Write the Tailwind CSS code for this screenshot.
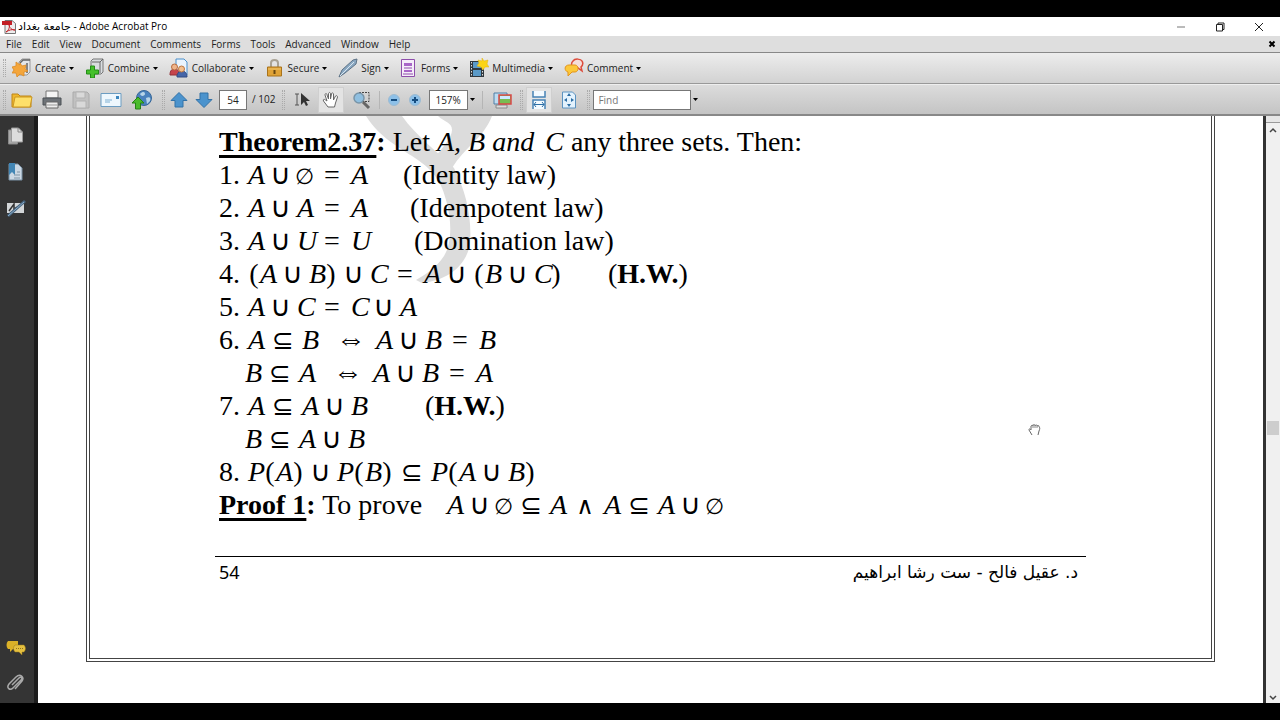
<!DOCTYPE html>
<html lang="en">

<head>
  <meta charset="utf-8">
  <title>Adobe Acrobat Pro</title>
  <script src="https://cdn.jsdelivr.net/npm/@tailwindcss/browser@4"></script>
  <script>
    // letters and operators each get their own cell so the formulas line up
    const cells = {
      '∪': "inline-block w-[33px] text-center font-['DejaVu_Sans'] leading-none",
      '∅': "inline-block w-[16px] -indent-[2px] font-['DejaVu_Sans'] text-[22px] leading-none",
      '=': 'inline-block w-[38px] text-center leading-none',
      '⊆': "inline-block w-[38px] text-center font-['DejaVu_Sans'] text-[26px] leading-none",
      '∧': "inline-block w-[38px] text-center font-['DejaVu_Sans'] text-[24px] leading-none",
      '⇔': "inline-block w-[58px] pl-[8px] text-center font-['Liberation_Serif'] text-[30px] leading-none",
      '(': 'inline-block w-[12px] text-center',
      ')': 'inline-block w-[12px] text-center',
    };

    window.addEventListener('DOMContentLoaded', () => {
      document.querySelectorAll('.formula').forEach((el) => {
        const chars = el.textContent.replace(/\s/g, '');
        el.textContent = '';
        for (const ch of chars) {
          const cell = document.createElement('span');
          cell.className = cells[ch] || 'inline-block w-[16px] italic';
          cell.textContent = ch;
          el.append(cell);
        }
      });
    });
  </script>
</head>

<body class="h-screen flex flex-col bg-black py-[17px] overflow-hidden font-['Open_Sans','Noto_Sans',sans-serif] text-[10px] text-[#222]">
  <!-- title bar -->
  <header class="h-[19px] shrink-0 flex items-center bg-white pl-0.5 pr-4 text-black">
    <svg class="w-[14px] h-[14px]" viewBox="0 0 14 14">
      <path d="M3 .5h7l3.500 3v10H3z" fill="#eee" stroke="#777" />
      <path d="M0 1h10v4H0z" fill="#c32026" />
      <path d="M4 12c3-2 4-5 3-8 0 4 3 6 6 6-3-1-6 0-9 2z" fill="none" stroke="#c32026" />
    </svg>
    <h1 class="ml-0.5 pt-0.5 whitespace-nowrap"><bdi class="font-['DejaVu_Sans'] text-[11px]">جامعة بغداد</bdi> - Adobe Acrobat Pro</h1>
    <div class="ml-auto flex items-center gap-[29px]">
      <button aria-label="Minimize"><svg class="w-[10px] h-[10px]" viewBox="0 0 10 10"><path d="M1 5h8" stroke="#777" /></svg></button>
      <button aria-label="Restore"><svg class="w-[10px] h-[10px]" viewBox="0 0 10 10" fill="none" stroke="#222"><path d="M1.500 2.500h6v6.500h-6zM3 2.500v-1.500h6v6.500h-1.500" /></svg></button>
      <button aria-label="Close"><svg class="w-[10px] h-[10px]" viewBox="0 0 10 10"><path d="M1 1l8 8M9 1l-8 8" stroke="#222" /></svg></button>
    </div>
  </header>

  <!-- menu bar -->
  <nav class="h-[17px] shrink-0 flex items-center gap-[10px] bg-[#dedede] pl-1.5 pr-1 border-b border-[#888]">
    <button>File</button>
    <button>Edit</button>
    <button>View</button>
    <button>Document</button>
    <button>Comments</button>
    <button>Forms</button>
    <button>Tools</button>
    <button>Advanced</button>
    <button>Window</button>
    <button>Help</button>
    <button class="ml-auto" aria-label="Close document"><svg class="w-[8px] h-[8px]" viewBox="0 0 8 8"><path d="M1.500 1.500l5 5M6.500 1.500l-5 5" stroke="#000" stroke-width="2" /></svg></button>
  </nav>

  <!-- task toolbar -->
  <div class="h-[31px] shrink-0 flex items-center gap-[11px] bg-linear-to-b from-[#ededed] to-[#d2d2d2] border-b border-[#999] pl-[3px]">
    <button class="flex items-center gap-[3px]">
      <span class="w-[3px] h-[18px] mr-[3px] border-x border-dotted border-[#aaa]"></span>
      <svg class="w-[20px] h-[20px]" viewBox="0 0 20 20">
        <path d="M7 4l3-3h8v13l-3 3H7z" fill="#e3e6e9" stroke="#999" />
        <path d="M8 5l3-3h7M15 5v10" fill="none" stroke="#666" stroke-width="1.500" />
        <path d="M8 6l2 3 4-1-1 4 3 2-4 1 0 4-4-2-3 3-1-4-4 0 2-3-2-3 4-1 0-4 4 3z" transform="translate(0 -1)" fill="#f4a63c" stroke="#dc8a25" stroke-width=".8" />
      </svg>
      <span>Create</span>
      <svg class="w-[5px] h-[3px]" viewBox="0 0 5 3"><path d="M0 0h5L2.500 3z" /></svg>
    </button>
    <button class="flex items-center gap-[3px]">
      <svg class="w-[20px] h-[20px]" viewBox="0 0 20 20">
        <path d="M6 3l2-2h10v13l-2 2H6z" fill="#d9dde0" stroke="#777" />
        <path d="M7 4h8v11M15 4l3-3" fill="none" stroke="#666" />
        <path d="M5.500 8h4v4h4v4h-4v4h-4v-4h-4v-4h4z" fill="#45c02b" stroke="#258d18" />
      </svg>
      <span>Combine</span>
      <svg class="w-[5px] h-[3px]" viewBox="0 0 5 3"><path d="M0 0h5L2.500 3z" /></svg>
    </button>
    <button class="flex items-center gap-[3px]">
      <svg class="w-[20px] h-[20px]" viewBox="0 0 20 20">
        <path d="M7 1h8l3 3v13H7z" fill="#eaf4fd" stroke="#4a90cc" />
        <path d="M1 17c0-5 2-6 5-6s4 2 4 6z" fill="#c6444c" stroke="#943039" />
        <circle cx="5.500" cy="9" r="3" fill="#efb48a" stroke="#b86d40" />
        <path d="M8 19c0-4 2-6 5-6s5 2 5 6z" fill="#4565a8" stroke="#314a82" />
        <circle cx="12.500" cy="11" r="3" fill="#f3bf8d" stroke="#bc7640" />
      </svg>
      <span>Collaborate</span>
      <svg class="w-[5px] h-[3px]" viewBox="0 0 5 3"><path d="M0 0h5L2.500 3z" /></svg>
    </button>
    <button class="flex items-center gap-[3px]">
      <svg class="w-[20px] h-[20px]" viewBox="0 0 20 20">
        <path d="M6 9V5c0-4 7-4 7 0v4" fill="none" stroke="#a9a294" stroke-width="2" />
        <path d="M2.500 9h14v9h-14z" fill="#e0a336" stroke="#a9731b" />
        <path d="M3 11h13" stroke="#f0c56c" />
        <path d="M9.500 12v4" stroke="#684711" stroke-width="2" />
      </svg>
      <span>Secure</span>
      <svg class="w-[5px] h-[3px]" viewBox="0 0 5 3"><path d="M0 0h5L2.500 3z" /></svg>
    </button>
    <button class="flex items-center gap-[3px]">
      <svg class="w-[20px] h-[20px]" viewBox="0 0 20 20">
        <path d="M1 19L4 12 15 2l4-1-1 5L7 15z" fill="#8aa8c2" stroke="#5d7286" />
        <path d="M2 18L16 4" stroke="#d9e6f0" />
      </svg>
      <span>Sign</span>
      <svg class="w-[5px] h-[3px]" viewBox="0 0 5 3"><path d="M0 0h5L2.500 3z" /></svg>
    </button>
    <button class="flex items-center gap-[3px]">
      <svg class="w-[18px] h-[20px]" viewBox="1 0 18 20">
        <path d="M2.500 1.500h13v17h-13z" fill="#f5edf9" stroke="#8e4eab" />
        <path d="M5 5h8v3H5zM5 12h8v2H5z" fill="#a866c8" />
        <path d="M5 10h8M4 16h10" stroke="#8e4eab" />
      </svg>
      <span>Forms</span>
      <svg class="w-[5px] h-[3px]" viewBox="0 0 5 3"><path d="M0 0h5L2.500 3z" /></svg>
    </button>
    <button class="flex items-center gap-[3px]">
      <svg class="w-[20px] h-[20px]" viewBox="0 0 20 20">
        <path d="M1 3h14v16H1z" fill="#30383e" />
        <path d="M4 4h8v6H4zM4 12h8v6H4z" fill="#5a9ac8" />
        <path d="M2.500 4v15M13.500 4v15" stroke="#ddd" stroke-dasharray="1.500 1.500" />
        <path d="M13 0l2 3 4-1-1 4 2 3-4 0-2 3-2-3-4-1 2-3-1-3 4 1z" fill="#fbd417" stroke="#e0b010" stroke-width=".5" />
      </svg>
      <span>Multimedia</span>
      <svg class="w-[5px] h-[3px]" viewBox="0 0 5 3"><path d="M0 0h5L2.500 3z" /></svg>
    </button>
    <button class="flex items-center gap-[3px]">
      <svg class="w-[20px] h-[20px]" viewBox="0 0 20 20">
        <path d="M9 3c2-3 8-2 9 0 2 3 0 5-1 6l1 4-4-3-5-1C7 8 7 5 9 3z" fill="#f5ded9" stroke="#dc4c3c" stroke-width="1.500" />
        <path d="M5 7h6c4 0 4 7 0 7H8l-4 4v-4c-4-1-4-7 1-7z" fill="#fcc83a" stroke="#e3951c" />
      </svg>
      <span>Comment</span>
      <svg class="w-[5px] h-[3px]" viewBox="0 0 5 3"><path d="M0 0h5L2.500 3z" /></svg>
    </button>
  </div>

  <!-- navigation toolbar -->
  <div class="h-[32px] shrink-0 flex items-center bg-linear-to-b from-[#dcdcdc] to-[#c4c4c4] border-t border-t-[#eee] border-b-2 border-b-[#888] pl-[3px]">
    <span class="w-[3px] h-[20px] border-x border-dotted border-[#aaa]"></span>
    <div class="flex items-center gap-[9px] ml-[5px]">
      <button aria-label="Open"><svg class="w-[22px] h-[20px]" viewBox="0 0 22 20">
        <path d="M1 17V4h6l2 2h11v11z" fill="#efb72d" stroke="#be8618" />
        <path d="M2 17L4 7h17l-2 10z" fill="#fee06a" stroke="#cc9823" />
      </svg></button>
      <button aria-label="Print"><svg class="w-[20px] h-[20px]" viewBox="0 0 20 20">
        <path d="M4 1h12v7H4z" fill="#f5f5f5" stroke="#777" />
        <path d="M1 8h18v7H1z" fill="#6e7378" stroke="#4b5055" />
        <path d="M4 12h12v6H4z" fill="#eee" stroke="#666" />
        <path d="M5 15h10" stroke="#999" />
      </svg></button>
      <button aria-label="Save" disabled><svg class="w-[20px] h-[20px]" viewBox="0 0 20 20">
        <path d="M2 2h14l2 2v14H2z" fill="#c1c1c1" stroke="#aaa" />
        <path d="M5 2h9v6H5zM5 11h10v7H5z" fill="#d9d9d9" stroke="#b3b3b3" />
      </svg></button>
      <button aria-label="E-mail"><svg class="w-[22px] h-[20px]" viewBox="0 0 22 20">
        <path d="M1 3.500h20v13H1z" fill="#eef7fd" stroke="#6c9dc2" />
        <path d="M16 6h3v3h-3z" fill="#3d87bf" />
        <path d="M5 10h7M5 12h5" stroke="#7cafd2" />
      </svg></button>
      <button aria-label="Upload"><svg class="w-[22px] h-[20px]" viewBox="0 0 22 20">
        <circle cx="13" cy="8" r="7.500" fill="#4a82bd" stroke="#376799" />
        <path d="M9 4c3-3 5-2 5 0s-4 3-5 0zM15 8c4-2 5 0 4 3l-3 3z" fill="#b8d5e8" />
        <path d="M7 7l6 6H9.500v6h-5v-6H1z" fill="#4abb2b" stroke="#268215" />
      </svg></button>
    </div>
    <span class="w-[3px] h-[20px] ml-[9px] mr-[5px] border-x border-dotted border-[#aaa]"></span>
    <button class="mr-[7px]" aria-label="Previous page"><svg class="w-[18px] h-[18px]" viewBox="0 0 18 18"><path d="M9 1.500l8 8h-4V16H5V9.500H1z" fill="#4b93cd" stroke="#3272a7" /></svg></button>
    <button aria-label="Next page"><svg class="w-[18px] h-[18px]" viewBox="0 0 18 18"><path d="M9 16.500l8-8h-4V2H5v6.500H1z" fill="#4b93cd" stroke="#3272a7" /></svg></button>
    <input aria-label="Page" value="54" class="w-[28px] h-[20px] ml-[6px] bg-white border border-[#777] text-center">
    <span class="ml-[5px] whitespace-pre">/ 102</span>
    <span class="w-[3px] h-[20px] ml-[7px] mr-[8px] border-x border-dotted border-[#aaa]"></span>
    <button aria-label="Select"><svg class="w-[18px] h-[16px]" viewBox="0 0 18 16">
      <path d="M2 2h4M4 2v11M2 13h4" stroke="#555" fill="none" />
      <path d="M8 1v12l3-3 2 4 2-1-2-4h4z" fill="#333" />
    </svg></button>
    <button class="ml-[7px] w-[26px] h-[26px] flex items-center justify-center bg-[#e3e3e3] border border-[#cfcfcf]" aria-label="Hand">
      <svg class="w-[18px] h-[18px]" viewBox="0 0 18 18"><path d="M6 16L1.500 10c-1-2 1-2 2-1l1.500 1-2-6c0-2 2-2 2 0l1.500 4V3c0-2 2-2 2 0v5l1-5c0-2 2-1 2 0v6l2-4c1-1 2 0 2 1l-2 6-1 4z" fill="#fff" stroke="#666" /></svg>
    </button>
    <button class="ml-[8px]" aria-label="Marquee zoom"><svg class="w-[20px] h-[20px]" viewBox="0 0 20 20">
      <path d="M7 2.500h10v9H8" fill="none" stroke="#444" stroke-dasharray="2 1" />
      <circle cx="7" cy="8" r="5" fill="#8fbfe0" stroke="#7894a8" stroke-width="1.500" />
      <path d="M11 12l6 6" stroke="#666" stroke-width="3" />
    </svg></button>
    <span class="w-px h-[18px] ml-[7px] mr-[7px] bg-[#b5b5b5]"></span>
    <button aria-label="Zoom out"><svg class="w-[14px] h-[14px]" viewBox="0 0 14 14"><circle cx="7" cy="7" r="5.500" fill="#8dc0e8" stroke="#9dbbd2" /><path d="M4 7h6" stroke="#164d80" stroke-width="2" /></svg></button>
    <button class="ml-[7px]" aria-label="Zoom in"><svg class="w-[14px] h-[14px]" viewBox="0 0 14 14"><circle cx="7" cy="7" r="5.500" fill="#8dc0e8" stroke="#9dbbd2" /><path d="M4 7h6M7 4v6" stroke="#164d80" stroke-width="2" /></svg></button>
    <input aria-label="Zoom" value="157%" class="w-[39px] h-[20px] ml-[7px] pl-[5px] bg-white border border-[#777]">
    <button class="ml-[2px]" aria-label="Zoom levels"><svg class="w-[5px] h-[3px]" viewBox="0 0 5 3"><path d="M0 0h5L2.500 3z" /></svg></button>
    <span class="w-px h-[18px] ml-[7px] mr-[10px] bg-[#b5b5b5]"></span>
    <button aria-label="Full screen"><svg class="w-[20px] h-[18px]" viewBox="0 0 20 18">
      <path d="M1 2h13v11H1z" fill="#bfdcf0" stroke="#507fa6" />
      <path d="M3 14h11v3H3z" fill="#ddd" stroke="#888" />
      <path d="M6 4h12v9H6z" fill="#78bd52" stroke="#d84848" stroke-width="1.500" />
      <path d="M7 5h10v3H7z" fill="#cdeaff" />
    </svg></button>
    <span class="w-[3px] h-[20px] ml-[7px] mr-[3px] border-x border-dotted border-[#aaa]"></span>
    <button class="w-[26px] h-[26px] flex items-center justify-center bg-[#e3e3e3] border border-[#cfcfcf]" aria-label="Fit width">
      <svg class="w-[16px] h-[18px]" viewBox="0 0 16 18">
        <path d="M2 0v6h12V0M2 18V9h12v9" fill="#f3faff" stroke="#4783b5" stroke-width="1.500" />
        <path d="M3 13.500h10M5 11l-2 2.500L5 16M11 11l2 2.500-2 2.500" fill="none" stroke="#2c6ea5" />
      </svg>
    </button>
    <button class="ml-[9px]" aria-label="Fit page"><svg class="w-[16px] h-[18px]" viewBox="0 0 16 18">
      <path d="M1.500 1h10l3 3v13h-13z" fill="#e3f2fd" stroke="#5b93c1" />
      <path d="M8 2l2 3H6zM8 16l2-3H6zM3 9l3-2v4zM13 9l-3-2v4z" fill="#2c6ea5" />
    </svg></button>
    <span class="w-[3px] h-[20px] ml-[10px] mr-[3px] border-x border-dotted border-[#aaa]"></span>
    <input aria-label="Find" placeholder="Find" class="w-[98px] h-[20px] pl-[4px] bg-white border border-[#777] placeholder:text-[#777]">
    <button class="ml-[2px]" aria-label="Find options"><svg class="w-[5px] h-[3px]" viewBox="0 0 5 3"><path d="M0 0h5L2.500 3z" /></svg></button>
  </div>

  <main class="flex-1 min-h-0 flex bg-white">
    <!-- navigation panes -->
    <aside class="w-[38px] shrink-0 flex flex-col bg-[#343434] border-r-4 border-[#1c1c1c] pl-[6px] pt-[10px] pb-[10px]">
      <button class="mb-[16px] w-[20px]" aria-label="Pages"><svg class="w-[20px] h-[20px]" viewBox="0 0 20 20"><path d="M2.500 4h9v14h-9z" fill="#aaa" stroke="#888" /><path d="M5.500 2h7l4 4v10h-11z" fill="#ddd" stroke="#999" /><path d="M12 2v4h4" fill="none" stroke="#888" /></svg></button>
      <button class="mb-[16px] w-[20px]" aria-label="Bookmarks"><svg class="w-[20px] h-[20px]" viewBox="0 0 20 20"><path d="M3 2h9l4 4v12H3z" fill="#cbd8e4" stroke="#7990a4" /><path d="M3 1h6v12l-3-3-3 3z" fill="#4286b5" /><path d="M8 13h6M11 10h3M8 16h6" stroke="#8094a5" /></svg></button>
      <button class="w-[20px]" aria-label="Signatures"><svg class="w-[20px] h-[20px]" viewBox="0 0 20 20"><path d="M1 5h17v10H1z" fill="#d3d6d8" /><path d="M3 13l5-7v5l3-2" fill="none" stroke="#333" stroke-width="1.500" /><path d="M2 18L19 3" stroke="#45627c" stroke-width="3" /><path d="M2 18L18 4" stroke="#8caecb" /></svg></button>
      <button class="mt-auto mb-[15px] w-[20px]" aria-label="Comments"><svg class="w-[20px] h-[20px]" viewBox="0 0 20 20"><path d="M2 3h10v8H7l-3 3v-3H2c-2-2-2-6 0-8z" fill="#dbb128" /><path d="M9 7h9c2 2 2 5 0 7h-2v3l-3-3H9c-2-2-2-5 0-7z" fill="#e5c040" stroke="#99781a" stroke-width=".5" /><path d="M10 10.500h7" stroke="#94751a" stroke-dasharray="1 1" /></svg></button>
      <button class="w-[20px]" aria-label="Attachments"><svg class="w-[20px] h-[20px]" viewBox="0 0 20 20"><path d="M6 12l7-7c2-2 4 0 2 2l-8 8c-3 3-7 0-4-4l7-7c4-4 9 0 6 4l-7 8" fill="none" stroke="#aaa" stroke-width="1.500" /></svg></button>
    </aside>

    <!-- page -->
    <section class="relative flex-1 min-w-0 pl-[48px] pr-[48px] pb-[41px] flex bg-white">
      <article class="relative flex-1 min-w-0 border-[4px] border-t-0 border-double border-[#444] px-[125px] font-['Liberation_Serif',serif] text-[28px] leading-[33px] text-black">
        <svg class="absolute left-[270px] top-0 w-[180px] h-[176px]" viewBox="0 0 180 176" fill="#dcdcdc">
          <path d="M6 0C20 22 40 32 55 42 75 55 82 68 86 84 92 104 92 128 84 140 76 152 66 158 56 164L62 167C88 164 106 150 110 128 112 100 106 76 94 52 80 38 56 20 42 0z" />
          <path d="M78 0c6 6 14 6 14 14 0 8-10 18-16 26l16 12c6-10 14-18 22-26 8-8 14-16 18-26z" />
        </svg>

        <div class="relative pt-[9px] pl-1 whitespace-nowrap">
          <p class="h-[33px]"><b class="underline underline-offset-4 decoration-[3px]">Theorem2.37</b><b>:</b> Let <i>A, B <span class="mr-[4px]">and</span> C</i> any three sets. Then:</p>
          <ol class="[&_.formula]:ml-[8px] [&>li]:h-[33px] [&_p]:h-[33px]">
            <li>1.<span class="formula">A ∪ ∅ = A</span><span class="ml-[36px]">(Identity law)</span></li>
            <li>2.<span class="formula">A ∪ A = A</span><span class="ml-[43px]">(Idempotent law)</span></li>
            <li>3.<span class="formula">A ∪ U = U</span><span class="ml-[47px]">(Domination law)</span></li>
            <li>4.<span class="formula">(A ∪ B) ∪ C = A ∪ (B ∪ C)</span><span class="ml-[46px]">(<b>H.W.</b>)</span></li>
            <li>5.<span class="formula">A ∪ C = C ∪ A</span></li>
            <li class="!h-[66px]"><p>6.<span class="formula">A ⊆ B ⇔ A ∪ B = B</span></p><p class="pl-[18px]"><span class="formula">B ⊆ A ⇔ A ∪ B = A</span></p></li>
            <li class="!h-[66px]"><p>7.<span class="formula">A ⊆ A ∪ B</span><span class="ml-[58px]">(<b>H.W.</b>)</span></p><p class="pl-[18px]"><span class="formula">B ⊆ A ∪ B</span></p></li>
            <li>8.<span class="formula">P(A) ∪ P(B) ⊆ P(A ∪ B)</span></li>
          </ol>
          <p class="h-[33px]"><b class="underline underline-offset-4 decoration-[3px]">Proof 1</b><b>:</b> To prove<span class="formula ml-[25px]">A ∪ ∅ ⊆ A ∧ A ⊆ A ∪ ∅</span></p>
        </div>

        <footer class="relative mt-[35px] border-t border-black pl-1 pr-2 flex justify-between font-['Noto_Sans'] text-[18px] leading-[30px]">
          <span>54</span>
          <span dir="rtl" lang="ar" class="font-['DejaVu_Sans'] text-[17px]">د. عقيل فالح - ست رشا ابراهيم</span>
        </footer>
      </article>

      <!-- hand cursor -->
      <svg class="absolute left-[990px] top-[307px] w-[13px] h-[13px]" viewBox="0 0 13 13"><path d="M4 12L1 7c0-2 1-1 2 0V3c1-1 2-1 2 0 0-2 2-2 2 0 1-2 2-1 2 0 2-1 2 0 2 1 1 0 1 2 0 4L10 12" fill="#fff" stroke="#666" /><path d="M5 3v2M7 3v2M9 3v2" stroke="#888" /></svg>
    </section>

    <!-- scrollbar -->
    <div class="w-[17px] shrink-0 flex flex-col items-center bg-[#f0f0f0] border-l-[3px] border-[#333]">
      <div class="w-full h-[7px] bg-[#e6e6e6] border-b border-[#999]"></div>
      <button class="mt-[4px]" aria-label="Scroll up"><svg class="w-[8px] h-[6px]" viewBox="0 0 8 6"><path d="M1 5l3-3 3 3" fill="none" stroke="#444" stroke-width="1.500" /></svg></button>
      <div class="w-full flex-1 flex flex-col">
        <div class="grow-[281]"></div>
        <div class="h-[14px] mx-px bg-[#cdcdcd]"></div>
        <div class="grow-[254]"></div>
      </div>
      <button class="mb-[2px]" aria-label="Scroll down"><svg class="w-[8px] h-[6px]" viewBox="0 0 8 6"><path d="M1 1l3 3 3-3" fill="none" stroke="#444" stroke-width="1.500" /></svg></button>
    </div>
  </main>
</body>

</html>
